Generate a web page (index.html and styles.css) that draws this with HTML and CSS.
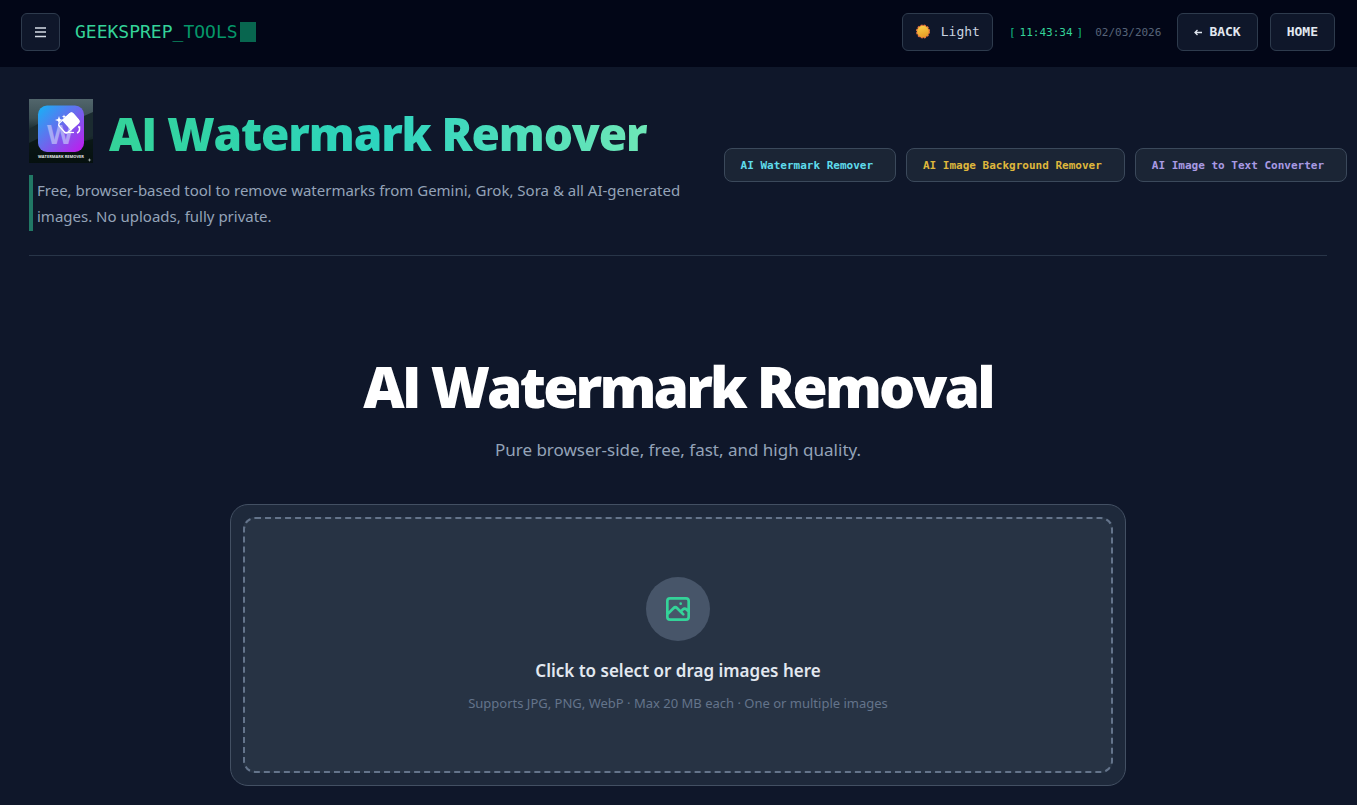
FILE: index.html
```html
<!DOCTYPE html>
<html lang="en">
<head>
<meta charset="utf-8">
<meta name="viewport" content="width=device-width, initial-scale=1">
<title>AI Watermark Remover</title>
<link rel="stylesheet" href="styles.css">
</head>
<body>
<header class="topbar">
  <div class="topbar-group">
    <button class="btn btn-menu" type="button" aria-label="Menu">
      <svg width="11" height="11" viewBox="0 0 11 11" aria-hidden="true"><path d="M0 1h11M0 5h11M0 9.500h11" stroke="#d5dbe5" stroke-width="1.300"/></svg>
    </button>
    <a class="brand" href="#">GEEKSPREP<span class="brand-score">_</span><span class="brand-tools">TOOLS</span><span class="brand-cursor"></span></a>
  </div>
  <div class="topbar-group topbar-actions">
    <button class="btn btn-theme" type="button">
      <svg width="16" height="16" viewBox="0 0 16 16" aria-hidden="true">
        <defs><linearGradient id="sun" x1="0" y1="0" x2="0.3" y2="1"><stop offset="0" stop-color="#fbd34a"/><stop offset="1" stop-color="#e9a028"/></linearGradient></defs>
        <circle cx="8" cy="7.500" r="6.200" fill="#e58a2b" stroke="#ec7440" stroke-width="1.600" stroke-dasharray="2 1.250"/>
        <circle cx="8" cy="7.500" r="5.700" fill="url(#sun)"/>
      </svg>
      Light
    </button>
    <div class="clock"><span class="bracket">[</span><time class="clock-time">11:43:34</time><span class="bracket">]</span></div>
    <time class="date">02/03/2026</time>
    <a class="btn btn-strong" href="#"><svg width="8" height="8" viewBox="0 0 8 8" aria-hidden="true"><path d="M8 4.500H1M3.500 2L1 4.500l2.500 2.500" fill="none" stroke="#dfe5ee" stroke-width="1.300"/></svg>BACK</a>
    <a class="btn btn-strong" href="#">HOME</a>
  </div>
</header>

<main class="page">
  <section class="intro">
    <div class="intro-text">
      <div class="intro-title">
        <svg class="app-logo" width="64" height="64" viewBox="0 0 64 64" role="img" aria-label="Watermark Remover">
          <defs>
            <linearGradient id="sky" x1="0" y1="0" x2="0" y2="1"><stop offset="0" stop-color="#52666c"/><stop offset=".3" stop-color="#3c5055"/><stop offset=".45" stop-color="#203236"/><stop offset="1" stop-color="#06100f"/></linearGradient>
            <linearGradient id="tile" x1="0" y1="0" x2="1" y2="1"><stop offset="0" stop-color="#14b4f6"/><stop offset=".5" stop-color="#6d67ed"/><stop offset="1" stop-color="#c516ee"/></linearGradient>
          </defs>
          <rect width="64" height="64" fill="url(#sky)"/>
          <path d="M0 30l9-5v16l-9 3zM55 17l9-4v24l-9 5z" fill="#1b2b30"/>
          <path d="M0 44l12-6 44 4 8-2v24H0z" fill="#06110f" opacity=".7"/>
          <rect x="9" y="6.500" width="46" height="46.500" rx="9" fill="url(#tile)"/>
          <text class="logo-w" x="31" y="45" text-anchor="middle">W</text>
          <g transform="rotate(-42 39.500 24)">
            <rect x="30.500" y="18" width="18.500" height="12.500" rx="2.500" fill="none" stroke="#fff" stroke-width="1.300"/>
            <path d="M36.500 17.500H47a2.500 2.500 0 012.500 2.500v8.500a2.500 2.500 0 01-2.500 2.500H36.500z" fill="#fff"/>
          </g>
          <path d="M35 33.500h10" stroke="#fff" stroke-width="1.200"/>
          <path d="M30 17l1 3 3 1-3 1-1 3-1-3-3-1 3-1zM35 15.500l.6 1.500 1.500.6-1.500.6-.6 1.500-.6-1.500-1.500-.6 1.500-.6z" fill="#fff"/>
          <path d="M49 28h1.500v2.500q0 2.500-2.500 3.500" stroke="#fff" stroke-width="1.500" fill="none"/>
          <text class="logo-caption" x="32" y="58.500" text-anchor="middle">WATERMARK REMOVER</text>
          <path d="M60.500 59l.5 1.500 1.500.5-1.500.5-.5 1.500-.5-1.500-1.500-.5 1.500-.5z" fill="#a4adac"/>
        </svg>
        <h1>AI Watermark Remover</h1>
      </div>
      <p class="intro-lead">Free, browser-based tool to remove watermarks from Gemini, Grok, Sora &amp; all AI-generated images. No uploads, fully private.</p>
    </div>
    <nav class="tool-links" aria-label="AI tools">
      <a class="tool tool-cyan" href="#">AI Watermark Remover</a>
      <a class="tool tool-yellow" href="#">AI Image Background Remover</a>
      <a class="tool tool-violet" href="#">AI Image to Text Converter</a>
    </nav>
  </section>

  <section class="hero">
    <h2>AI Watermark Removal</h2>
    <p class="hero-sub">Pure browser-side, free, fast, and high quality.</p>
    <div class="card">
      <label class="dropzone" for="images">
        <input class="file-input" id="images" type="file" accept="image/*" multiple>
        <span class="drop-icon">
          <svg width="32" height="32" viewBox="0 0 24 24" fill="none" stroke="#34d399" stroke-width="2" stroke-linecap="round" stroke-linejoin="round" aria-hidden="true"><path d="M4 16l4.586-4.586a2 2 0 012.828 0L16 16m-2-2l1.586-1.586a2 2 0 012.828 0L20 14m-6-6h.01M6 20h12a2 2 0 002-2V6a2 2 0 00-2-2H6a2 2 0 00-2 2v12a2 2 0 002 2z"/></svg>
        </span>
        <span class="drop-title">Click to select or drag images here</span>
        <span class="drop-note">Supports JPG, PNG, WebP · Max 20 MB each · One or multiple images</span>
      </label>
    </div>
  </section>
</main>
</body>
</html>
```

FILE: styles.css
```css
:root {
  --display: "Open Sans", "Noto Sans", sans-serif;
  --sans: "Noto Sans", "Open Sans", sans-serif;
  --mono: "DejaVu Sans Mono", "Liberation Mono", monospace;
}

* {
  box-sizing: border-box;
}

body {
  margin: 0;
  background: #0f172a;
  color: #e2e8f0;
  font-family: var(--sans);
}

h1, h2, p {
  margin: 0;
}

a {
  text-decoration: none;
}

.topbar {
  display: flex;
  align-items: center;
  justify-content: space-between;
  padding: 13px 22px 16px 21px;
  background: #020617;
  font-family: var(--mono);
}

.topbar-group {
  display: flex;
  align-items: center;
  gap: 15px;
}

.topbar-actions {
  gap: 12px;
}

.btn {
  display: flex;
  align-items: center;
  justify-content: center;
  height: 38px;
  padding: 0 16px;
  border: 1px solid #2e3b4d;
  border-radius: 6px;
  background: #0f172a;
  color: #cbd5e1;
  font: 13px/20px var(--mono);
  cursor: pointer;
}

.btn-menu {
  width: 39px;
  padding: 0;
}

.btn-theme {
  gap: 10px;
  padding: 0 12px;
}

.btn-strong {
  gap: 7px;
  color: #e2e8f0;
  font-weight: 700;
}

.brand {
  display: flex;
  align-items: center;
  color: #34d399;
  font-size: 18px;
  line-height: 22px;
}

.brand-score {
  color: #10b981;
}

.brand-tools {
  color: #059669;
}

.brand-cursor {
  width: 16px;
  height: 20px;
  margin-left: 2px;
  background: #08664f;
}

.clock {
  display: flex;
  gap: 4px;
  margin-left: 4px;
  color: #34d399;
  font-size: 11px;
}

.bracket {
  color: #10b981;
}

.date {
  margin-right: 4px;
  color: #576479;
  font-size: 11px;
}

.page {
  padding: 32px 30px 19px 29px;
}

.intro {
  display: flex;
  align-items: center;
  gap: 28px;
  padding-bottom: 24px;
  border-bottom: 1px solid #283548;
}

.intro-text {
  flex: 1 1 0;
  min-width: 0;
}

.intro-title {
  display: flex;
  align-items: center;
  gap: 16px;
  margin-bottom: 12px;
}

.app-logo {
  flex: none;
}

.logo-w {
  fill: #c4c6fa;
  fill-opacity: .7;
  font: 700 27px var(--sans);
}

.logo-caption {
  fill: #e5e9e9;
  font: 700 4px var(--display);
}

h1 {
  padding-top: 4px;
  background: linear-gradient(to right, #34d399, #2dd4bf 50%, #6ee7b7);
  -webkit-background-clip: text;
  background-clip: text;
  color: transparent;
  font: 800 46px/60px var(--display);
  letter-spacing: -0.025em;
  white-space: nowrap;
}

.intro-lead {
  padding: 2px 4px;
  border-left: 4px solid #217865;
  color: #94a3b8;
  font-size: 15px;
  line-height: 26px;
}

.tool-links {
  display: flex;
  flex: none;
  gap: 10px;
  margin-right: -20px;
}

.tool {
  padding: 9px 22px 7px 16px;
  border: 1px solid #3b495b;
  border-radius: 8px;
  background: #1b2535;
  font: 700 11px/16px var(--mono);
  white-space: nowrap;
}

.tool-cyan {
  color: #5fdcec;
}

.tool-yellow {
  color: #dfb73c;
}

.tool-violet {
  color: #a99ae3;
}

.hero {
  display: flex;
  flex-direction: column;
  align-items: center;
  padding-top: 96px;
}

h2 {
  color: #fff;
  font: 800 57px/68px var(--display);
  letter-spacing: -0.05em;
  text-align: center;
}

.hero-sub {
  margin-top: 16px;
  color: #94a3b8;
  font-size: 17px;
  line-height: 28px;
  text-align: center;
}

.card {
  width: 100%;
  max-width: 896px;
  margin-top: 40px;
  padding: 12px;
  border: 1px solid #435063;
  border-radius: 18px;
  background: #1e293b;
}

.dropzone {
  position: relative;
  display: flex;
  flex-direction: column;
  align-items: center;
  padding: 58px 24px;
  border: 2px dashed #64748b;
  border-radius: 12px;
  background: #273344;
  text-align: center;
  cursor: pointer;
}

.file-input {
  position: absolute;
  inset: 0;
  opacity: 0;
  cursor: pointer;
}

.drop-icon {
  display: flex;
  align-items: center;
  justify-content: center;
  width: 64px;
  height: 64px;
  margin-bottom: 16px;
  border-radius: 50%;
  background: #475569;
}

.drop-title {
  margin-bottom: 8px;
  font-size: 17px;
  font-weight: 600;
  line-height: 28px;
}

.drop-note {
  color: #64748b;
  font-size: 13px;
  line-height: 20px;
}
```
